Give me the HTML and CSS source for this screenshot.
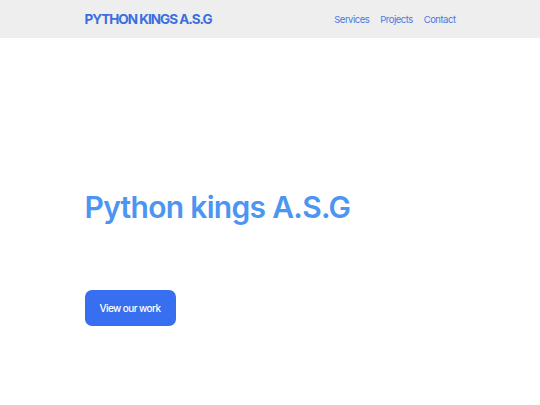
FILE: index.html
```html
<!DOCTYPE html>
<html>
<head>
<meta charset="utf-8">
<link rel="stylesheet" href="styles.css">
</head>
<body>
<header class="header">
  <div class="container header-inner">
    <a class="logo" href="#">PYTHON KINGS A.S.G</a>
    <nav class="nav">
      <a href="#">Services</a>
      <a href="#">Projects</a>
      <a href="#">Contact</a>
    </nav>
  </div>
</header>
<main class="hero">
  <div class="container hero-inner">
    <h1 class="hero-title">Python kings A.S.G</h1>
    <a class="btn" href="#">View our work</a>
  </div>
</main>
</body>
</html>
```
FILE: styles.css
```css
* { box-sizing: border-box; }
html, body { margin: 0; padding: 0; background: #ffffff; }
body { font-family: Inter, "Open Sans", sans-serif; }
a { text-decoration: none; }
.container { width: 371px; margin: 0 auto; }
.header { background: #eeeeee; height: 38px; }
.header-inner { height: 38px; display: flex; align-items: center; justify-content: space-between; }
.logo { color: #3a6ee0; font-weight: 700; font-size: 13.5px; letter-spacing: -1px; line-height: 16px; }
.nav { display: flex; gap: 11px; }
.nav a { color: #4a79e0; font-size: 9.5px; letter-spacing: -0.5px; }
.hero { padding-top: 154px; }
.hero-inner { display: flex; flex-direction: column; align-items: flex-start; }
.hero-title { margin: 0; color: #4c95f2; font-weight: 600; font-size: 30px; letter-spacing: -0.7px; line-height: 30px; }
.btn { display: flex; align-items: center; justify-content: center; margin-top: 68px; width: 91px; height: 36px; background: #386ef0; color: #fff; font-size: 10px; letter-spacing: -0.6px; font-weight: 500; border-radius: 7px; }
```
